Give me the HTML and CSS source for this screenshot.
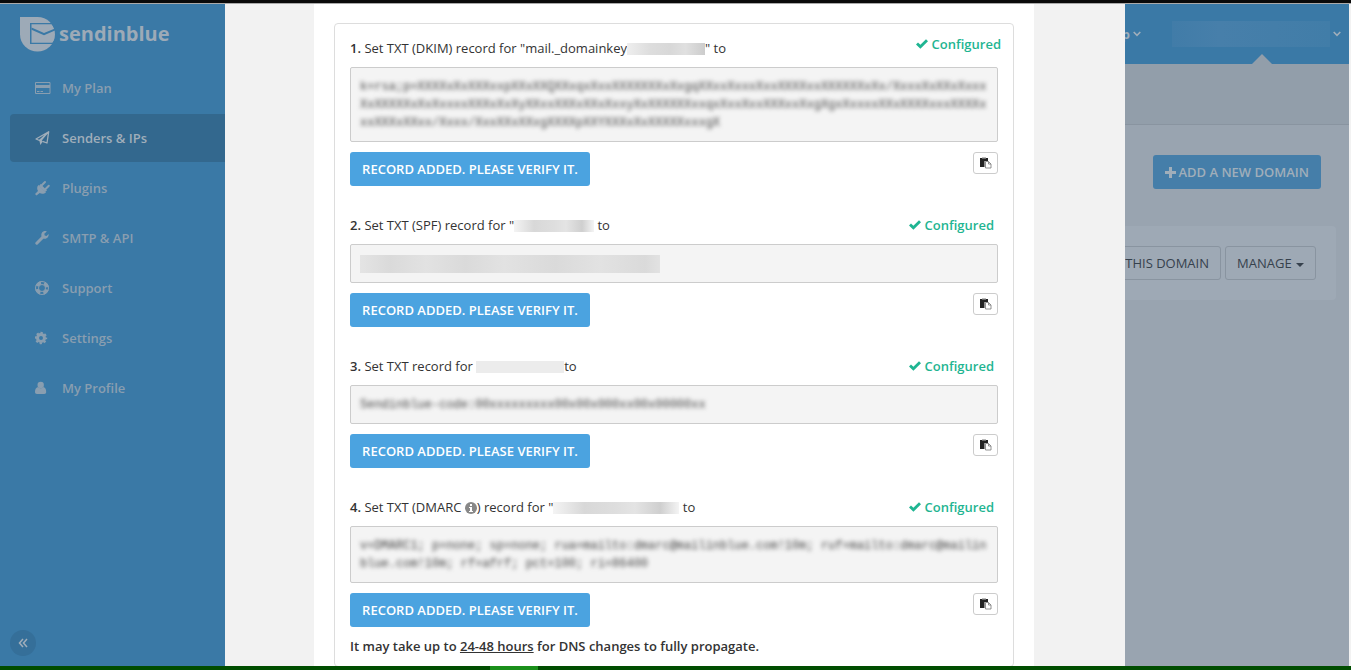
FILE: index.html
```html
<!DOCTYPE html>
<html lang="en">
<head>
  <meta charset="UTF-8">
  <meta name="viewport" content="width=device-width, initial-scale=1.0">
  <title>Senders &amp; IPs</title>
  <link rel="stylesheet" href="styles.css">
</head>
<body>

  <svg width="0" height="0" class="sprite" aria-hidden="true">
    <symbol id="check" viewBox="0 0 12 10">
      <path d="M0 5.4 L2 3.4 L4.4 5.7 L10 0.3 L12 2.3 L4.4 9.8 Z"/>
    </symbol>
    <symbol id="paste" viewBox="0 0 12 12">
      <path fill="#222" d="M0 1h8v3H4.500v6H0z"/>
      <path fill="#bbb" d="M2 0h4v1.500H2z"/>
      <path fill="#fff" stroke="#777" stroke-width=".8" d="M5.500 4.500h3l2.500 2.500v4H5.500z"/>
      <path fill="none" stroke="#777" stroke-width=".8" d="M8.500 4.500v2.500H11"/>
    </symbol>
    <symbol id="chevron" viewBox="0 0 8 6">
      <path fill="none" stroke="currentColor" stroke-width="1.600" d="M.7 1 L4 4.300 L7.300 1"/>
    </symbol>
  </svg>

  <div class="frame-top"></div>

  <div class="app">
    <aside class="sidebar">
      <a class="logo" href="#">
        <svg width="35" height="35" viewBox="0 0 35 35">
          <path fill="currentColor" d="M0 0h17.500a17.500 17.300 0 1 1-17.500 17.300z"/>
          <path fill="#3a79a6" d="M10 6h22v1.300H11.500v18.400H33V27H10z"/>
          <path fill="#3a79a6" d="M11.500 10.500L24 16l11-4.500v2L24 18.200l-12.500-5.400z"/>
          <path fill="#3a79a6" d="M31 6l4 6.500V6zM32.500 25.700L35 22v5h-2.500z"/>
        </svg>
        <span>sendinblue</span>
      </a>
      <nav>
        <a class="nav-item" href="#">
          <svg width="16" height="16" viewBox="0 0 16 16"><path fill="none" stroke="currentColor" d="M.5 2.500h14.500v11H.5z"/><path fill="currentColor" d="M0 5h15v3H0zM2 11h2.500v1H2zM5.500 11H8v1H5.500z"/></svg>
          My Plan
        </a>
        <a class="nav-item active" href="#">
          <svg width="16" height="16" viewBox="0 0 16 16"><path fill="none" stroke="currentColor" stroke-width="1.300" stroke-linejoin="round" d="M13.700 1.700L1 9l3.500 1.500L13.700 1.700 12 13l-4.500-1.700"/><path fill="currentColor" d="M4.300 10l1 5 2.500-3.500-1-1L13 3z"/></svg>
          Senders &amp; IPs
        </a>
        <a class="nav-item" href="#">
          <svg width="16" height="16" viewBox="0 0 16 16"><path fill="currentColor" d="M3.500 5l7.500 7.500c-2 1.700-4.500 1.700-6.300.6L1.500 15.500 0 14l3-3C1.800 9 1.800 6.700 3.500 5z"/><path fill="currentColor" d="M5.500 4l6.500 6.500-2 1.500L4 6z"/><path stroke="currentColor" stroke-width="2" stroke-linecap="round" d="M6.500 5.500L10 2M10.300 9.300L13.800 5.800"/></svg>
          Plugins
        </a>
        <a class="nav-item" href="#">
          <svg width="16" height="16" viewBox="0 0 16 16"><path stroke="currentColor" stroke-width="3" stroke-linecap="round" d="M1.800 13.200L8 7"/><path fill="currentColor" d="M11.800 1.400L9.300 3.800l.4 1.700 1.800.5 2.100-2c.6 3-2.300 5.600-5 4.500-3-1.200-3-5.700-.3-7 1.200-.7 2.500-.6 3.500-.1z"/></svg>
          SMTP &amp; API
        </a>
        <a class="nav-item" href="#">
          <svg width="16" height="16" viewBox="0 0 16 16"><circle cx="7" cy="8" r="5.200" fill="none" stroke="currentColor" stroke-width="3.400" stroke-dasharray="4.900 3.270" stroke-dashoffset="-1.600"/><circle cx="7" cy="8" r="6.500" fill="none" stroke="currentColor"/><circle cx="7" cy="8" r="3.500" fill="none" stroke="currentColor"/></svg>
          Support
        </a>
        <a class="nav-item" href="#">
          <svg width="16" height="16" viewBox="0 0 16 16"><circle cx="6" cy="8" r="3.500" fill="none" stroke="currentColor" stroke-width="3"/><circle cx="6" cy="8" r="5.200" fill="none" stroke="currentColor" stroke-width="2" stroke-dasharray="2.300 1.780" stroke-dashoffset="1.150"/></svg>
          Settings
        </a>
        <a class="nav-item" href="#">
          <svg width="16" height="16" viewBox="0 0 16 16"><circle cx="5.700" cy="5" r="3.200" fill="currentColor"/><path fill="currentColor" d="M3 7c1.500 1.600 4 1.600 5.500 0C10.500 7.500 11.200 9.500 11.200 12c0 1.300-.7 2-2 2H2c-1.300 0-2-.7-2-2 0-2.500.8-4.500 3-5z"/></svg>
          My Profile
        </a>
      </nav>
      <button class="collapse" type="button" aria-label="Collapse menu">
        <svg width="10" height="10" viewBox="0 0 10 10"><path fill="none" stroke="currentColor" stroke-width="1.500" d="M5 1L1.500 5 5 9M9 1L5.500 5 9 9"/></svg>
      </button>
    </aside>

    <main class="overlay">
      <div class="modal">
        <div class="records">

          <section class="record">
            <div class="record-head record-head-first">
              <p><b>1.</b> Set TXT (DKIM) record for "mail._domainkey<span class="mask mask-s"></span>" to</p>
              <span class="status"><svg width="12" height="10"><use href="#check"/></svg>Configured</span>
            </div>
            <pre class="value"><code>k=rsa;p=XXXXxXxXXXxxpXXxXXQXXxqxXxxXXXXXXXxXxgqXXxxXxxxXxxXXXXxxXXXXXXxXx/XxxxXxXXxXxxx
XxXXXXXxXxXxxxxXXXxXxXyXXxxXXXxXXxXxxyXxXXXXXXxxqxXxxXxxXXXxxXxgXgxXxxxxXXxXXXXxxxXXXXx
xxXXXxXXxx/Xxxx/XxxXXxXXxgXXXXpXXYXXXxXxXXXXXxxxgX</code></pre>
            <div class="record-foot">
              <button class="btn verify" type="button">RECORD ADDED. PLEASE VERIFY IT.</button>
              <button class="copy" type="button" aria-label="Copy"><svg width="12" height="12"><use href="#paste"/></svg></button>
            </div>
          </section>

          <section class="record">
            <div class="record-head">
              <p><b>2.</b> Set TXT (SPF) record for "<span class="mask mask-m"></span> to</p>
              <span class="status"><svg width="12" height="10"><use href="#check"/></svg>Configured</span>
            </div>
            <pre class="value"><span class="mask-line"></span></pre>
            <div class="record-foot">
              <button class="btn verify" type="button">RECORD ADDED. PLEASE VERIFY IT.</button>
              <button class="copy" type="button" aria-label="Copy"><svg width="12" height="12"><use href="#paste"/></svg></button>
            </div>
          </section>

          <section class="record">
            <div class="record-head">
              <p><b>3.</b> Set TXT record for <span class="mask mask-light"></span>to</p>
              <span class="status"><svg width="12" height="10"><use href="#check"/></svg>Configured</span>
            </div>
            <pre class="value"><code>Sendinblue-code:00xxxxxxxxx00x00x000xx00x00000xx</code></pre>
            <div class="record-foot">
              <button class="btn verify" type="button">RECORD ADDED. PLEASE VERIFY IT.</button>
              <button class="copy" type="button" aria-label="Copy"><svg width="12" height="12"><use href="#paste"/></svg></button>
            </div>
          </section>

          <section class="record">
            <div class="record-head">
              <p><b>4.</b> Set TXT (DMARC <svg class="info" width="12" height="12" viewBox="0 0 12 12"><circle cx="6" cy="6" r="6" fill="#888"/><path fill="#fff" d="M5 2h2v2H5zM4 5h3v4h1v1H4V9h1V6H4z"/></svg>) record for "<span class="mask mask-l"></span> to</p>
              <span class="status"><svg width="12" height="10"><use href="#check"/></svg>Configured</span>
            </div>
            <pre class="value"><code>v=DMARC1; p=none; sp=none; rua=mailto:dmarc@mailinblue.com!10m; ruf=mailto:dmarc@mailin
blue.com!10m; rf=afrf; pct=100; ri=86400</code></pre>
            <div class="record-foot">
              <button class="btn verify" type="button">RECORD ADDED. PLEASE VERIFY IT.</button>
              <button class="copy" type="button" aria-label="Copy"><svg width="12" height="12"><use href="#paste"/></svg></button>
            </div>
          </section>

          <p class="note">It may take up to <u>24-48 hours</u> for DNS changes to fully propagate.</p>
        </div>
      </div>
    </main>

    <div class="page">
      <header class="topbar">
        <a href="#">p <svg width="8" height="6"><use href="#chevron"/></svg></a>
        <a href="#"><span class="account"></span><svg width="8" height="6"><use href="#chevron"/></svg></a>
      </header>
      <div class="subbar"></div>
      <div class="content">
        <button class="btn add" type="button"><svg width="11" height="11" viewBox="0 0 11 11"><path fill="currentColor" d="M4 0h3v4h4v3H7v4H4V7H0V4h4z"/></svg>ADD A NEW DOMAIN</button>
        <div class="domain">
          <button class="btn-line" type="button">THIS DOMAIN</button>
          <button class="btn-line" type="button">MANAGE <svg width="8" height="4" viewBox="0 0 8 4"><path fill="currentColor" d="M0 0h8L4 4z"/></svg></button>
        </div>
      </div>
    </div>
  </div>

  <div class="frame-bottom"></div>

</body>
</html>
```
FILE: styles.css
```css
* { box-sizing: border-box; margin: 0; padding: 0; }
body {
  display: flex;
  flex-direction: column;
  height: 100vh;
  overflow: hidden;
  font-family: 'Open Sans', sans-serif;
  font-size: 13px;
  line-height: 20px;
  color: #333;
  background: #f2f2f2;
}
a { color: inherit; text-decoration: none; }
button { font: inherit; cursor: pointer; }
.sprite { position: absolute; }

/* window edges */
.frame-top {
  flex: none;
  height: 4px;
  background: #0a0a0a;
  border-bottom: 1px solid #aaa;
}
.frame-bottom {
  flex: none;
  height: 4px;
  background: linear-gradient(90deg, #004d00 0 490px, #1a8f1a 490px 538px, #004d00 538px);
}
.app {
  flex: 1;
  min-height: 0;
  display: flex;
  padding-right: 2px;
}

/* sidebar */
.sidebar {
  flex: none;
  width: 225px;
  display: flex;
  flex-direction: column;
  padding: 12px 0 10px 10px;
  background: #3a79a6;
  color: #899eb0;
}
.logo {
  display: flex;
  align-items: center;
  gap: 4px;
  height: 36px;
  margin: 0 0 12px 10px;
  font-size: 20px;
  font-weight: bold;
  color: #9daab7;
}
.nav-item {
  display: flex;
  align-items: center;
  gap: 11px;
  height: 48px;
  margin-bottom: 2px;
  padding-left: 25px;
  font-weight: 600;
  border-radius: 4px 0 0 4px;
}
.nav-item.active {
  background: #33688e;
  color: #a0aeba;
}
.collapse {
  display: flex;
  align-items: center;
  justify-content: center;
  width: 26px;
  height: 26px;
  margin-top: auto;
  border: none;
  border-radius: 50%;
  background: #356f99;
  color: #a0aeba;
}

/* dialog */
.overlay {
  flex: 1;
  min-width: 0;
  padding: 0 91px 0 89px;
  overflow: hidden;
}
.modal {
  min-height: 100%;
  padding: 19px 20px 20px;
  background: #fff;
}
.records {
  padding: 10px 15px;
  border: 1px solid #ddd;
  border-radius: 4px;
}
.record { margin-bottom: 29px; }
.record:last-of-type { margin-bottom: 9px; }
.record-head {
  display: flex;
  justify-content: space-between;
  align-items: flex-end;
  height: 20px;
  margin-bottom: 9px;
  padding-right: 4px;
  white-space: nowrap;
}
.record-head-first {
  height: 24px;
  margin-right: -7px;
}
.record-head-first .status { align-self: flex-start; }
.record-head b { font-weight: 600; }
.status {
  display: flex;
  align-items: center;
  gap: 4px;
  font-weight: 600;
  color: #1fb592;
  fill: currentColor;
}
.info { vertical-align: -2px; }
.value {
  padding: 10px 9px 9px;
  border: 1px solid #ccc;
  border-radius: 2px;
  background: #f4f4f4;
  line-height: 18px;
}
.value code {
  display: block;
  font-family: 'Liberation Mono', monospace;
  font-size: 12px;
  color: #444;
  filter: blur(2px);
}
.record-foot {
  display: flex;
  justify-content: space-between;
  align-items: flex-start;
  margin-top: 10px;
}
.btn {
  height: 34px;
  padding: 0 12px;
  border: none;
  border-radius: 3px;
  background: #4ba3e0;
  color: #fff;
  font-weight: 600;
}
.verify { min-width: 240px; }
.copy {
  display: flex;
  align-items: center;
  justify-content: center;
  width: 25px;
  height: 22px;
  border: 1px solid #ccc;
  border-radius: 3px;
  background: #fff;
}
.note {
  font-weight: 600;
  color: #333;
}

/* hidden values */
.mask {
  display: inline-block;
  height: 12px;
  vertical-align: -2px;
  background: linear-gradient(90deg, #eee, #ddd 30%, #d8d8d8 55%, #e0e0e0 75%, #ccc);
}
.mask-s { width: 78px; }
.mask-m,
.mask-l {
  background: linear-gradient(90deg, #f4f4f4, #d8d8d8 25%, #dedede 50%, #e4e4e4 65%, #cfcfcf 85%, #f4f4f4);
}
.mask-m { width: 80px; }
.mask-l { width: 126px; }
.mask-light { width: 88px; background: #ececec; }
.mask-line {
  display: block;
  width: 300px;
  height: 18px;
  background: linear-gradient(90deg, #e4e4e4, #dadada 10%, #e2e2e2 22%, #dadada 35%, #e2e2e2 48%, #dadada 65%, #e2e2e2 80%, #dadada 95%, #e2e2e2);
}

/* page behind the dialog */
.page {
  flex: none;
  width: 224px;
  overflow: hidden;
  background: #99a4b0;
}
.topbar {
  position: relative;
  display: flex;
  align-items: center;
  justify-content: flex-end;
  gap: 31px;
  height: 60px;
  padding-right: 8px;
  background: #3a79a6;
  color: #a0aeba;
  font-weight: bold;
}
.topbar a {
  display: flex;
  align-items: center;
  gap: 3px;
}
.topbar::after {
  content: "";
  position: absolute;
  right: 77px;
  bottom: 0;
  border: 10px solid transparent;
  border-top: none;
  border-bottom-color: #929eaa;
}
.account {
  width: 158px;
  height: 26px;
  background: linear-gradient(90deg, #417ca8, #477faa 30%, #417da8);
}
.subbar {
  height: 61px;
  background: #929eaa;
  border-bottom: 1px solid #8994a0;
}
.content {
  display: flex;
  flex-direction: column;
  align-items: flex-end;
  padding: 30px 13px 0 0;
}
.add {
  display: flex;
  align-items: center;
  gap: 2px;
  margin-right: 15px;
  background: #457ea9;
  color: #a0aeba;
}
.domain {
  display: flex;
  justify-content: flex-end;
  gap: 4px;
  width: 100%;
  margin-top: 37px;
  padding: 20px;
  border-radius: 0 4px 4px 0;
  background: #9ea9b5;
}
.btn-line {
  flex: none;
  height: 34px;
  padding: 0 11px;
  border: 1px solid #8994a0;
  border-radius: 3px;
  background: none;
  color: #36414d;
}
.btn-line svg {
  margin-left: 1px;
  vertical-align: 1px;
}
```
